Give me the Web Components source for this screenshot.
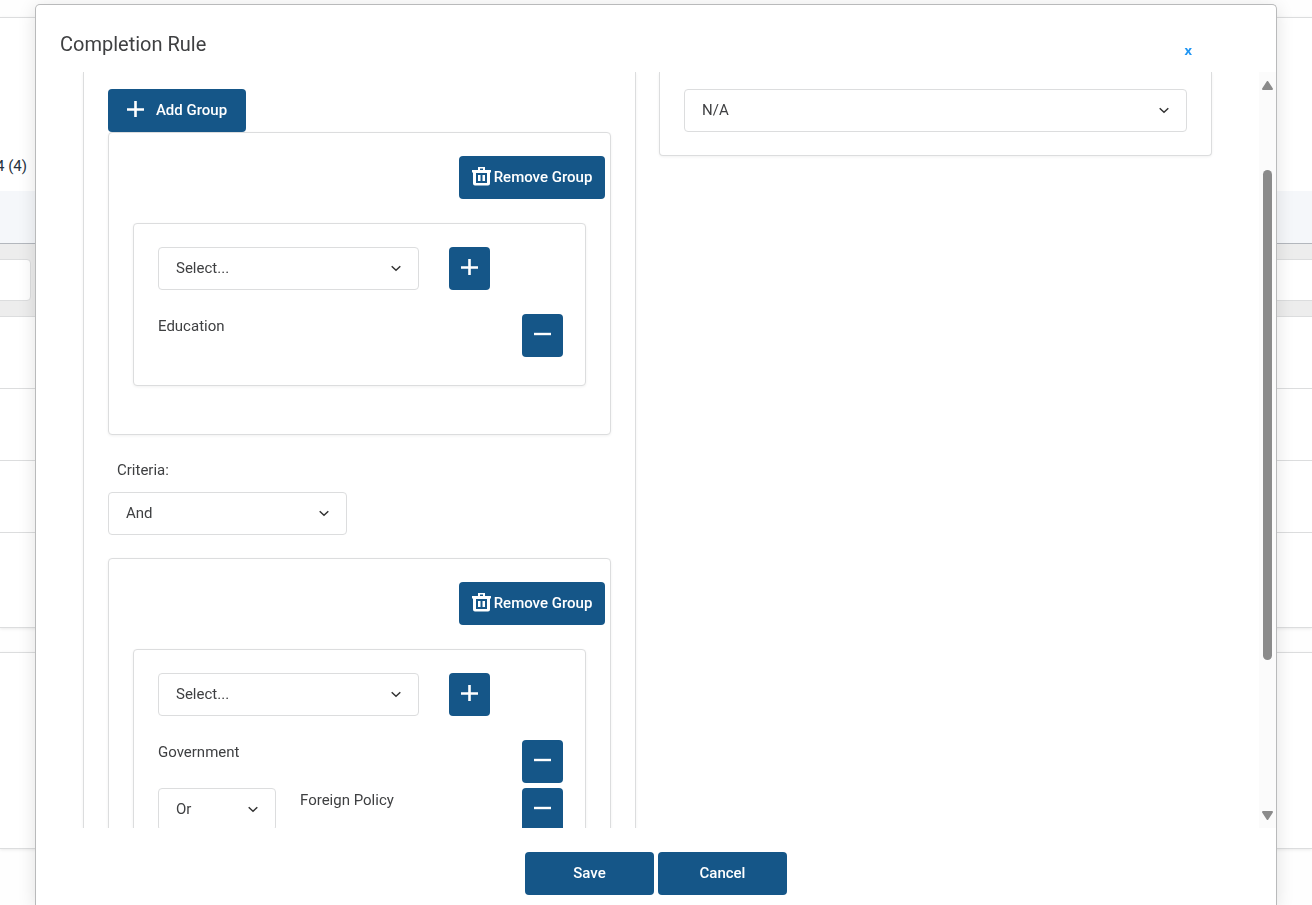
<!DOCTYPE html>
<html lang="en">
<head>
<meta charset="utf-8">
<title>Completion Rule</title>
<style>
  html, body {
    height: 100%;
    margin: 0;
    overflow: hidden;
  }
  body {
    font-family: Roboto, "Liberation Sans", sans-serif;
    font-size: 15px;
    line-height: 24px;
    color: #3f4042;
    background: #fefefe;
    --border: #dcddde;
    --primary: #155688;
  }
</style>
</head>
<body>
<records-page></records-page>
<rule-modal heading="Completion Rule">
  <rule-panel>
    <rule-button icon="plus" roomy>Add Group</rule-button>
    <rule-group>
      <rule-item>Education</rule-item>
    </rule-group>
    <rule-select class="criteria" label="Criteria:" options="And,Or" show-label></rule-select>
    <rule-group>
      <rule-item>Government</rule-item>
      <rule-item joined>Foreign Policy</rule-item>
    </rule-group>
  </rule-panel>
  <rule-panel>
    <rule-select label="Expiration" options="N/A"></rule-select>
  </rule-panel>
  <rule-button slot="footer" wide>Save</rule-button>
  <rule-button slot="footer" wide>Cancel</rule-button>
</rule-modal>

<script>
const ICONS = {
  plus: '<svg width="17" height="17" viewBox="0 0 17 17"><path d="M8.5 0v16M0 8.500h17" stroke="#fff" stroke-width="2.600"/></svg>',
  minus: '<svg width="17" height="17" viewBox="0 0 17 17"><path d="M0 8h17" stroke="#fff" stroke-width="2.400"/></svg>',
  trash: `<svg width="19" height="19" viewBox="0 0 19 19" fill="#fff">
    <path fill-rule="evenodd" d="M6 0h7v3h6v2.500h-1v11a2 2 0 0 1-2 2H3a2 2 0 0 1-2-2v-11H0V3h6zM8 1.500V3h3V1.500zM4 6v10h11V6z"/>
    <path d="M6 8h2.500v6H6zM10.500 8H13v6h-2.500z"/>
  </svg>`
};

// clones a template into a fresh shadow root
const render = (element, markup) => {
  const template = document.createElement('template');
  template.innerHTML = markup;
  const root = element.attachShadow({ mode: 'open' });
  root.appendChild(template.content.cloneNode(true));
  return root;
};

class RuleButton extends HTMLElement {
  constructor() {
    super();
    this.root = render(this, `
      <style>
        :host { display: inline-flex; }
        button {
          box-sizing: border-box;
          height: 43px;
          min-width: 146px;
          padding: 0 8px 2px;
          display: flex;
          align-items: center;
          justify-content: center;
          gap: 3px;
          border: 0;
          border-radius: 4px;
          background: var(--primary);
          color: #fff;
          font: 500 15px/24px Roboto, "Liberation Sans", sans-serif;
          white-space: nowrap;
          cursor: pointer;
        }
        svg { flex: none; display: block; }
        :host([roomy]) button { min-width: 138px; gap: 12px; }
        :host([wide]) button { min-width: 129px; }
        :host([square]) button { min-width: 41px; }
      </style>
      <button type="button"><slot></slot></button>
    `);
  }

  connectedCallback() {
    const $button = this.root.querySelector('button');
    const icon = this.getAttribute('icon');
    if (icon && !$button.querySelector('svg')) {
      $button.insertAdjacentHTML('afterbegin', ICONS[icon]);
    }
    if (this.hasAttribute('square')) {
      $button.style.gap = '0';
    }
    if (this.hasAttribute('label')) {
      $button.setAttribute('aria-label', this.getAttribute('label'));
    }
  }
}

class RuleSelect extends HTMLElement {
  constructor() {
    super();
    this.root = render(this, `
      <style>
        :host { display: block; min-width: 0; }
        :host(.criteria) { width: 239px; margin: 23px 0; }
        label { display: none; padding-left: 9px; margin-bottom: 10px; }
        :host([show-label]) label { display: block; }
        .box { position: relative; }
        select {
          box-sizing: border-box;
          display: block;
          width: 100%;
          height: 43px;
          padding: 0 36px 1px 17px;
          appearance: none;
          border: 1px solid var(--border);
          border-radius: 4px;
          background: #fff;
          color: inherit;
          font: inherit;
        }
        svg {
          position: absolute;
          right: 18px;
          top: 18px;
          pointer-events: none;
        }
      </style>
      <label for="field"></label>
      <div class="box">
        <select id="field"></select>
        <svg width="10" height="7" viewBox="0 0 10 7" fill="none" stroke="#333" stroke-width="1.5"><path d="M.7 1.200 5 5.200l4.300-4"/></svg>
      </div>
    `);
  }

  connectedCallback() {
    const label = this.getAttribute('label');
    const $select = this.root.querySelector('select');
    this.root.querySelector('label').textContent = label;
    $select.setAttribute('aria-label', label);
    $select.replaceChildren(...this.getAttribute('options').split(',').map((text) => new Option(text)));
  }
}

class RuleItem extends HTMLElement {
  constructor() {
    super();
    this.root = render(this, `
      <style>
        :host { display: flex; align-items: flex-start; margin-bottom: 5px; }
        rule-select { width: 118px; margin-right: 24px; }
        :host(:not([joined])) rule-select { display: none; }
        .name { flex: 1; min-width: 0; }
      </style>
      <rule-select label="Operator" options="Or,And"></rule-select>
      <span class="name"><slot></slot></span>
      <rule-button square icon="minus" label="Remove item"></rule-button>
    `);
  }
}

class RuleGroup extends HTMLElement {
  constructor() {
    super();
    render(this, `
      <style>
        :host, .items {
          display: block;
          border: 1px solid var(--border);
          border-radius: 4px;
          background: #fff;
          box-shadow: 0 1px 3px rgba(0, 0, 0, 6%);
        }
        :host { padding: 23px 0 48px; }
        .actions { display: flex; justify-content: flex-end; padding-right: 5px; }
        .items { margin: 24px 24px 0; padding: 23px 22px 23px 24px; }
        .adder {
          display: flex;
          gap: 30px;
          padding-right: 73px;
          margin-bottom: 24px;
        }
        .adder rule-select { flex: 1; }
      </style>
      <div class="actions"><rule-button icon="trash">Remove Group</rule-button></div>
      <div class="items">
        <div class="adder">
          <rule-select label="Course" options="Select..."></rule-select>
          <rule-button square icon="plus" label="Add item"></rule-button>
        </div>
        <slot></slot>
      </div>
    `);
  }
}

class RulePanel extends HTMLElement {
  constructor() {
    super();
    render(this, `
      <style>
        :host {
          display: block;
          padding: 17px 24px 23px;
          border: 1px solid var(--border);
          border-top: 0;
          border-radius: 0 0 4px 4px;
          background: #fff;
          box-shadow: 0 1px 3px rgba(0, 0, 0, 6%);
        }
      </style>
      <slot></slot>
    `);
  }
}

class ScrollRail extends HTMLElement {
  constructor() {
    super();
    render(this, `
      <style>
        :host {
          box-sizing: border-box;
          width: 17px;
          padding: 9px 0 8px;
          display: flex;
          flex-direction: column;
          align-items: center;
          background: #fbfbfb;
        }
        svg { flex: none; fill: #8b8b8b; stroke: #8b8b8b; stroke-width: 2; stroke-linejoin: round; }
        .thumb {
          width: 9px;
          height: 490px;
          margin: 80px 0 auto;
          border-radius: 5px;
          background: #8b8b8b;
        }
      </style>
      <svg width="11" height="9" viewBox="0 0 11 9"><path d="M5.500 1 10 8H1z"/></svg>
      <div class="thumb"></div>
      <svg width="11" height="9" viewBox="0 0 11 9"><path d="M5.500 8 1 1h9z"/></svg>
    `);
  }
}

class RuleModal extends HTMLElement {
  constructor() {
    super();
    this.root = render(this, `
      <style>
        :host {
          box-sizing: border-box;
          position: fixed;
          inset: 0;
          padding: 4px 35px 0;
          display: flex;
        }
        .dialog {
          flex: 1;
          min-width: 0;
          display: flex;
          flex-direction: column;
          border: 1px solid #b9babb;
          border-bottom: 0;
          border-radius: 5px 5px 0 0;
          background: #fff;
          box-shadow: 0 3px 18px rgba(0, 0, 0, 12%);
        }
        header {
          box-sizing: border-box;
          height: 67px;
          padding: 24px 80px 0 24px;
          display: flex;
          align-items: flex-start;
          justify-content: space-between;
        }
        h1 { margin: 0; font-size: 20px; line-height: 30px; font-weight: 400; }
        .close {
          margin-top: 9px;
          padding: 0 4px;
          border: 0;
          background: none;
          color: #2196f3;
          font: 700 13px/24px "Open Sans", sans-serif;
          cursor: pointer;
        }
        .body { flex: 1; min-height: 0; display: flex; }
        .content {
          flex: 1;
          min-width: 0;
          padding: 0 47px;
          display: grid;
          grid-template-columns: minmax(0, 1fr) minmax(0, 1fr);
          gap: 23px;
          align-items: start;
          overflow: hidden;
        }
        footer { padding: 24px 0 10px; display: flex; justify-content: center; gap: 4px; }
      </style>
      <section class="dialog" role="dialog" aria-labelledby="heading">
        <header>
          <h1 id="heading"></h1>
          <button class="close" type="button" aria-label="Close">x</button>
        </header>
        <div class="body">
          <div class="content"><slot></slot></div>
          <scroll-rail></scroll-rail>
        </div>
        <footer><slot name="footer"></slot></footer>
      </section>
    `);
  }

  connectedCallback() {
    this.root.querySelector('h1').textContent = this.getAttribute('heading');
  }
}

// the records list lying behind the dialog
class RecordsPage extends HTMLElement {
  constructor() {
    super();
    render(this, `
      <style>
        :host { display: block; padding-top: 17px; }
        .card {
          border: solid var(--border);
          border-width: 1px 0;
          background: #fff;
          box-shadow: 0 1px 3px rgba(0, 0, 0, 8%);
        }
        .count { height: 24px; padding: 136px 0 13px; margin-left: -4px; color: #26323e; }
        .head { height: 52px; background: #f5f7fa; border-bottom: 1px solid #b3b7bd; }
        .filters {
          display: flex;
          gap: 10px;
          padding: 15px 0;
          margin-left: -5px;
          background: #ededed;
          border-bottom: 1px solid var(--border);
        }
        input {
          box-sizing: border-box;
          height: 42px;
          width: 36px;
          border: 1px solid var(--border);
          border-radius: 4px;
          background: #fff;
        }
        input + input { flex: 1; margin-right: -5px; }
        .row { height: 71px; border-bottom: 1px solid var(--border); }
        .pager { height: 94px; }
        .second { height: 195px; margin-top: 24px; }
      </style>
      <div class="card">
        <div class="count">4 (4)</div>
        <div class="head"></div>
        <div class="filters">
          <input type="text" aria-label="Filter id">
          <input type="text" aria-label="Filter name">
        </div>
        <div class="row"></div>
        <div class="row"></div>
        <div class="row"></div>
        <div class="pager"></div>
      </div>
      <div class="card second"></div>
    `);
  }
}

customElements.define('rule-button', RuleButton);
customElements.define('rule-select', RuleSelect);
customElements.define('rule-item', RuleItem);
customElements.define('rule-group', RuleGroup);
customElements.define('rule-panel', RulePanel);
customElements.define('scroll-rail', ScrollRail);
customElements.define('rule-modal', RuleModal);
customElements.define('records-page', RecordsPage);
</script>
</body>
</html>
